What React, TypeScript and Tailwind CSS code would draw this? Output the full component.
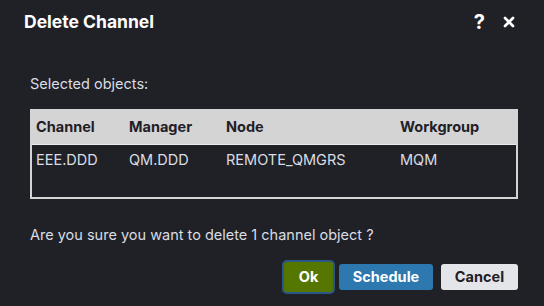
import { X } from "lucide-react";

const rows = [
  { channel: "EEE.DDD", manager: "QM.DDD", node: "REMOTE_QMGRS", workgroup: "MQM" },
];

export default function App() {
  return (
    <div
      className="flex h-[306px] w-[544px] flex-col bg-[#202127] text-[#d9dde3]"
      style={{ fontFamily: "Inter, 'Noto Sans', sans-serif" }}
    >
      <div className="flex h-[44px] items-center justify-between pl-6 pr-[28px]">
        <h1 className="text-[17.5px] font-bold text-white">Delete Channel</h1>
        <div className="flex items-center gap-[15px] text-white">
          <span className="text-[20px] font-bold leading-none">?</span>
          <X className="h-[16px] w-[16px] translate-x-[1px]" strokeWidth={4} />
        </div>
      </div>

      <div className="flex flex-1 flex-col pl-[30px] pr-[26px]">
        <p className="mt-[30px] text-[14.5px] leading-[20px]">Selected objects:</p>

        <div className="mt-[15px] h-[90px] border-2 border-[#d4d4d4]">
          <table className="w-full table-fixed border-collapse text-[14.5px]">
            <thead>
              <tr className="h-[33px] border-b border-[#ebebeb] bg-[#d4d4d4] text-left font-bold text-[#1f2027]">
                <th className="w-[97px] pl-1 font-bold">Channel</th>
                <th className="w-[97px] font-bold">Manager</th>
                <th className="w-[174px] font-bold">Node</th>
                <th className="font-bold">Workgroup</th>
              </tr>
            </thead>
            <tbody>
              {rows.map((r) => (
                <tr key={r.channel} className="h-[32px]">
                  <td className="pl-1">{r.channel}</td>
                  <td>{r.manager}</td>
                  <td>{r.node}</td>
                  <td>{r.workgroup}</td>
                </tr>
              ))}
            </tbody>
          </table>
        </div>

        <p className="mt-[26px] text-[14.5px] leading-[20px]">
          Are you sure you want to delete 1 channel object ?
        </p>

        <div className="mt-[15px] flex items-center justify-end gap-[4px]">
          <button className="h-[34px] w-[53px] rounded-[5px] border-2 border-[#2b5788] bg-[#557700] text-[14.5px] font-bold text-white">
            Ok
          </button>
          <button className="h-[26px] w-[94px] rounded-[3px] bg-[#2d78ae] text-[14.5px] font-bold text-white">
            Schedule
          </button>
          <button className="ml-[4px] h-[26px] w-[77px] rounded-[3px] bg-[#e4e5e8] text-[14.5px] font-bold text-[#1f2027]">
            Cancel
          </button>
        </div>
      </div>
    </div>
  );
}
